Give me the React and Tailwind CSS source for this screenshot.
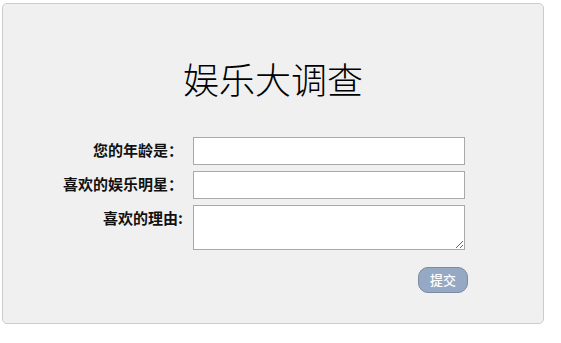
export default function App() {
  return (
    <div className="w-[561px] h-[343px] bg-white pt-[3px] pl-[2px]" style={{ fontFamily: '"Noto Sans CJK SC", sans-serif' }}>
      <div className="w-[542px] h-[321px] border border-[#cccccc] rounded-[5px] bg-[#f0f0f0]">
        <h1 className="mt-[56px] text-center text-[36px] leading-[36px] font-light text-black">娱乐大调查</h1>
        <form className="mt-[41px] grid grid-cols-[180px_272px] gap-x-[10px] gap-y-[6px]">
          <label className="text-right text-[15px] font-bold text-[#111] leading-[26px]">您的年龄是：</label>
          <input type="text" className="h-[28px] bg-white border border-[#a9a9a9] outline-none px-1" />
          <label className="text-right text-[15px] font-bold text-[#111] leading-[26px]">喜欢的娱乐明星：</label>
          <input type="text" className="h-[28px] bg-white border border-[#a9a9a9] outline-none px-1" />
          <label className="text-right text-[15px] font-bold text-[#111] leading-[26px]">喜欢的理由:</label>
          <textarea className="h-[45px] bg-white border border-[#a9a9a9] outline-none px-1 resize-y" />
          <div />
          <div className="mt-[11px] flex justify-end mr-[-3px]">
            <button type="button" className="w-[50px] h-[26px] rounded-[10px] bg-[#95a8c4] border border-[#7a8aa3] text-white text-[13px] font-medium leading-[24px]">提交</button>
          </div>
        </form>
      </div>
    </div>
  );
}
